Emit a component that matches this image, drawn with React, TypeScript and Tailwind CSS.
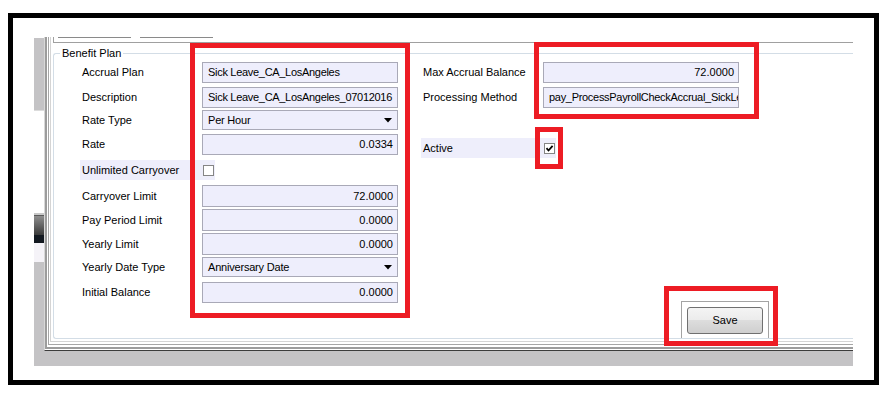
import React from 'react';

type Row = {
    label: string;
    kind: 'text' | 'num' | 'combo' | 'check';
    value?: string;
    h: string;
    mt: string;
    checked?: boolean;
};

const leftRows: Row[] = [
    { label: 'Accrual Plan', kind: 'text', value: 'Sick Leave_CA_LosAngeles', h: 'h-[21px]', mt: '' },
    { label: 'Description', kind: 'text', value: 'Sick Leave_CA_LosAngeles_07012016', h: 'h-[21px]', mt: 'mt-[4px]' },
    { label: 'Rate Type', kind: 'combo', value: 'Per Hour', h: 'h-[20px]', mt: 'mt-[2px]' },
    { label: 'Rate', kind: 'num', value: '0.0334', h: 'h-[21px]', mt: 'mt-[4px]' },
    { label: 'Unlimited Carryover', kind: 'check', h: 'h-[20px]', mt: 'mt-[5px]' },
    { label: 'Carryover Limit', kind: 'num', value: '72.0000', h: 'h-[22px]', mt: 'mt-[5px]' },
    { label: 'Pay Period Limit', kind: 'num', value: '0.0000', h: 'h-[22px]', mt: 'mt-[2px]' },
    { label: 'Yearly Limit', kind: 'num', value: '0.0000', h: 'h-[22px]', mt: 'mt-[2px]' },
    { label: 'Yearly Date Type', kind: 'combo', value: 'Anniversary Date', h: 'h-[20px]', mt: 'mt-[2px]' },
    { label: 'Initial Balance', kind: 'num', value: '0.0000', h: 'h-[21px]', mt: 'mt-[5px]' },
];

const rightRows: Row[] = [
    { label: 'Max Accrual Balance', kind: 'num', value: '72.0000', h: 'h-[21px]', mt: '' },
    { label: 'Processing Method', kind: 'text', value: 'pay_ProcessPayrollCheckAccrual_SickLeave', h: 'h-[21px]', mt: 'mt-[4px]' },
    { label: 'Active', kind: 'check', checked: true, h: 'h-[20px]', mt: 'mt-[30px]' },
];

const CheckBox = ({ checked }: { checked?: boolean }) => (
    <svg width="11" height="11" viewBox="0 0 11 11" className="block">
        <rect x="0.5" y="0.5" width="10" height="10" fill="#fff" stroke="#858585" />
        {checked && <path d="M2.5 5.2 L4.5 7.5 L8.6 2.8" fill="none" stroke="#000" strokeWidth="1.8" />}
    </svg>
);

const FormRow = ({ row }: { row: Row }) => {
    if (row.kind === 'check') {
        return (
            <div className={`flex ${row.mt} ${row.h} w-[135px] bg-[#eeeefb]`}>
                <div className="flex h-full w-[122px] items-center pl-[2px] whitespace-nowrap">{row.label}</div>
                <div className="flex h-full items-center pl-[1px]">
                    <CheckBox checked={row.checked} />
                </div>
            </div>
        );
    }

    return (
        <div className={`flex ${row.mt} ${row.h}`}>
            <div className="flex h-full w-[122px] items-center pl-[2px] whitespace-nowrap">{row.label}</div>
            {row.kind === 'combo' ? (
                <div className="flex h-full w-[196px] items-center justify-between border border-[#a9a9b7] bg-[#eeeefc] pl-[5px] pr-[5px]">
                    <span className="tracking-[-0.2px]">{row.value}</span>
                    <svg width="8" height="5" viewBox="0 0 8 5">
                        <polygon points="0,0 8,0 4,4.5" fill="#000" />
                    </svg>
                </div>
            ) : (
                <div
                    className={
                        row.kind === 'num'
                            ? 'flex h-full w-[196px] items-center justify-end overflow-hidden whitespace-nowrap border border-[#a9a9b7] bg-[#eeeefc] pr-[4px]'
                            : 'flex h-full w-[196px] items-center overflow-hidden whitespace-nowrap border border-[#a9a9b7] bg-[#eeeefc] pl-[5px] tracking-[-0.3px]'
                    }
                >
                    {row.value}
                </div>
            )}
        </div>
    );
};

const App = () => {
    return (
        <div className="relative h-[396px] w-[887px] overflow-hidden bg-white pl-[8px] pt-[13px] font-['Liberation_Sans',Arial,sans-serif] text-[11px] leading-[13px] text-black">
            <div className="h-[372px] w-[871px] border-[5px] border-black pl-[21px] pt-[19px]">
                <div className="flex h-[329px]">
                    {/* left strip */}
                    <div className="flex w-[10px] flex-col">
                        <div className="h-px bg-white" />
                        <div className="h-[72px] bg-[#c4c3c5]" />
                        <div className="h-px bg-[#dcdcdc]" />
                        <div className="h-[102px] bg-white" />
                        <div className="h-[2px] bg-[#c8c8c8]" />
                        <div className="h-px bg-[#5a5a5a]" />
                        <div className="h-[19px] bg-[linear-gradient(#8e8e8e,#3a3a3a)]" />
                        <div className="h-[8px] bg-[#121820]" />
                        <div className="h-[19px] bg-[#f5f3f8]" />
                        <div className="flex-1 bg-[#c4c3c5]" />
                    </div>

                    {/* main panel */}
                    <div className="flex w-[809px] flex-col">
                        <div className="flex h-[314px] flex-col border-b border-l border-b-[#3c3c3c] border-l-[#d8d8d8] bg-white pb-[1px]">
                            <div className="flex flex-1 flex-col border-b-[2px] border-l-[2px] border-[#9c9c9c] pb-[2px] pl-[1px]">
                                <div className="flex flex-1 flex-col border-b border-l border-[#a6a6a6] pb-[2px] pl-[1px]">
                                    <div className="flex flex-1 flex-col border-b border-l border-[#d4d4d4] pb-[2px] pl-[2px]">
                                        {/* tab strip */}
                                        <div className="flex h-[6px] border-b border-l border-[#a0a0a0]">
                                            <div className="ml-[4px] h-px w-[73px] bg-[#8a8a8a]" />
                                            <div className="ml-[9px] h-px w-[73px] bg-[#8a8a8a]" />
                                        </div>

                                        <fieldset className="mt-[4px] flex-1 rounded-l-[3px] border border-r-0 border-[#d3dde6]">
                                            <legend className="ml-[6px] px-[2px] leading-[13px]">Benefit Plan</legend>
                                            <div className="flex h-[278px] pt-[2px]">
                                                <div className="ml-[26px] flex w-[318px] flex-col">
                                                    {leftRows.map((r) => (
                                                        <FormRow key={r.label} row={r} />
                                                    ))}
                                                </div>
                                                <div className="ml-[23px] flex flex-col">
                                                    {rightRows.map((r) => (
                                                        <FormRow key={r.label} row={r} />
                                                    ))}
                                                    <div className="ml-[260px] mt-auto h-[37px] w-[88px] border-l border-r border-t border-[#a3a3a3] px-[5px] pt-[5px]">
                                                        <button className="flex h-[27px] w-[76px] items-center justify-center rounded-[3px] border border-[#707070] bg-[linear-gradient(#f4f4f4_0%,#ebebeb_50%,#dddddd_50%,#cfcfcf_100%)]">
                                                            Save
                                                        </button>
                                                    </div>
                                                </div>
                                            </div>
                                        </fieldset>
                                    </div>
                                </div>
                            </div>
                        </div>
                        <div className="h-[15px] bg-[#c4c3c5]" />
                    </div>
                </div>
            </div>

            {/* red annotation boxes */}
            <div className="absolute left-[190px] top-[43px] h-[275px] w-[220px] border-[5px] border-[#ed1c24]" />
            <div className="absolute left-[534px] top-[42px] h-[77px] w-[225px] border-[5px] border-[#ed1c24]" />
            <div className="absolute left-[535px] top-[127px] h-[42px] w-[28px] border-[5px] border-[#ed1c24]" />
            <div className="absolute left-[664px] top-[286px] h-[60px] w-[114px] border-[5px] border-[#ed1c24]" />
        </div>
    );
};

export default App;
